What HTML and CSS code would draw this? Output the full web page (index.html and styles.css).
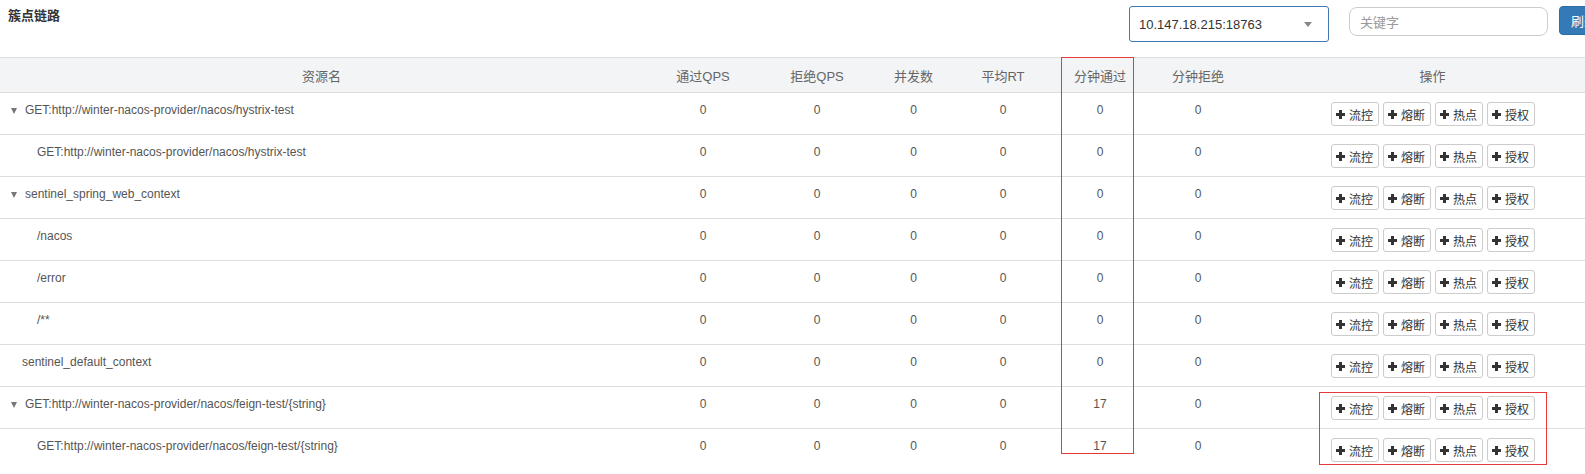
FILE: index.html
```html
<!DOCTYPE html>
<html lang="zh-CN">
<head>
<meta charset="utf-8">
<title>簇点链路</title>
<link rel="stylesheet" href="styles.css">
</head>
<body>
<div class="page">
  <div class="topbar">
    <div class="title">簇点链路</div>
    <div class="controls">
      <div class="select"><span>10.147.18.215:18763</span><i class="caret"></i></div>
      <div class="search"><span class="placeholder">关键字</span></div>
      <div class="refresh">刷新</div>
    </div>
  </div>

  <div class="table">
    <div class="row head">
      <div class="c">资源名</div>
      <div class="c">通过QPS</div>
      <div class="c">拒绝QPS</div>
      <div class="c">并发数</div>
      <div class="c">平均RT</div>
      <div class="c">分钟通过</div>
      <div class="c">分钟拒绝</div>
      <div class="c">操作</div>
    </div>

    <div class="row">
      <div class="name"><i class="toggle"></i>GET:http://winter-nacos-provider/nacos/hystrix-test</div>
      <div class="num">0</div><div class="num">0</div><div class="num">0</div><div class="num">0</div><div class="num">0</div><div class="num">0</div>
      <div class="ops"><span class="btn"><svg class="plus" viewBox="0 0 9 9"><rect x="3" y="0" width="3" height="9"/><rect x="0" y="3" width="9" height="3"/></svg>流控</span><span class="btn"><svg class="plus" viewBox="0 0 9 9"><rect x="3" y="0" width="3" height="9"/><rect x="0" y="3" width="9" height="3"/></svg>熔断</span><span class="btn"><svg class="plus" viewBox="0 0 9 9"><rect x="3" y="0" width="3" height="9"/><rect x="0" y="3" width="9" height="3"/></svg>热点</span><span class="btn"><svg class="plus" viewBox="0 0 9 9"><rect x="3" y="0" width="3" height="9"/><rect x="0" y="3" width="9" height="3"/></svg>授权</span></div>
    </div>

    <div class="row">
      <div class="name child">GET:http://winter-nacos-provider/nacos/hystrix-test</div>
      <div class="num">0</div><div class="num">0</div><div class="num">0</div><div class="num">0</div><div class="num">0</div><div class="num">0</div>
      <div class="ops"><span class="btn"><svg class="plus" viewBox="0 0 9 9"><rect x="3" y="0" width="3" height="9"/><rect x="0" y="3" width="9" height="3"/></svg>流控</span><span class="btn"><svg class="plus" viewBox="0 0 9 9"><rect x="3" y="0" width="3" height="9"/><rect x="0" y="3" width="9" height="3"/></svg>熔断</span><span class="btn"><svg class="plus" viewBox="0 0 9 9"><rect x="3" y="0" width="3" height="9"/><rect x="0" y="3" width="9" height="3"/></svg>热点</span><span class="btn"><svg class="plus" viewBox="0 0 9 9"><rect x="3" y="0" width="3" height="9"/><rect x="0" y="3" width="9" height="3"/></svg>授权</span></div>
    </div>

    <div class="row">
      <div class="name"><i class="toggle"></i>sentinel_spring_web_context</div>
      <div class="num">0</div><div class="num">0</div><div class="num">0</div><div class="num">0</div><div class="num">0</div><div class="num">0</div>
      <div class="ops"><span class="btn"><svg class="plus" viewBox="0 0 9 9"><rect x="3" y="0" width="3" height="9"/><rect x="0" y="3" width="9" height="3"/></svg>流控</span><span class="btn"><svg class="plus" viewBox="0 0 9 9"><rect x="3" y="0" width="3" height="9"/><rect x="0" y="3" width="9" height="3"/></svg>熔断</span><span class="btn"><svg class="plus" viewBox="0 0 9 9"><rect x="3" y="0" width="3" height="9"/><rect x="0" y="3" width="9" height="3"/></svg>热点</span><span class="btn"><svg class="plus" viewBox="0 0 9 9"><rect x="3" y="0" width="3" height="9"/><rect x="0" y="3" width="9" height="3"/></svg>授权</span></div>
    </div>

    <div class="row">
      <div class="name child">/nacos</div>
      <div class="num">0</div><div class="num">0</div><div class="num">0</div><div class="num">0</div><div class="num">0</div><div class="num">0</div>
      <div class="ops"><span class="btn"><svg class="plus" viewBox="0 0 9 9"><rect x="3" y="0" width="3" height="9"/><rect x="0" y="3" width="9" height="3"/></svg>流控</span><span class="btn"><svg class="plus" viewBox="0 0 9 9"><rect x="3" y="0" width="3" height="9"/><rect x="0" y="3" width="9" height="3"/></svg>熔断</span><span class="btn"><svg class="plus" viewBox="0 0 9 9"><rect x="3" y="0" width="3" height="9"/><rect x="0" y="3" width="9" height="3"/></svg>热点</span><span class="btn"><svg class="plus" viewBox="0 0 9 9"><rect x="3" y="0" width="3" height="9"/><rect x="0" y="3" width="9" height="3"/></svg>授权</span></div>
    </div>

    <div class="row">
      <div class="name child">/error</div>
      <div class="num">0</div><div class="num">0</div><div class="num">0</div><div class="num">0</div><div class="num">0</div><div class="num">0</div>
      <div class="ops"><span class="btn"><svg class="plus" viewBox="0 0 9 9"><rect x="3" y="0" width="3" height="9"/><rect x="0" y="3" width="9" height="3"/></svg>流控</span><span class="btn"><svg class="plus" viewBox="0 0 9 9"><rect x="3" y="0" width="3" height="9"/><rect x="0" y="3" width="9" height="3"/></svg>熔断</span><span class="btn"><svg class="plus" viewBox="0 0 9 9"><rect x="3" y="0" width="3" height="9"/><rect x="0" y="3" width="9" height="3"/></svg>热点</span><span class="btn"><svg class="plus" viewBox="0 0 9 9"><rect x="3" y="0" width="3" height="9"/><rect x="0" y="3" width="9" height="3"/></svg>授权</span></div>
    </div>

    <div class="row">
      <div class="name child">/**</div>
      <div class="num">0</div><div class="num">0</div><div class="num">0</div><div class="num">0</div><div class="num">0</div><div class="num">0</div>
      <div class="ops"><span class="btn"><svg class="plus" viewBox="0 0 9 9"><rect x="3" y="0" width="3" height="9"/><rect x="0" y="3" width="9" height="3"/></svg>流控</span><span class="btn"><svg class="plus" viewBox="0 0 9 9"><rect x="3" y="0" width="3" height="9"/><rect x="0" y="3" width="9" height="3"/></svg>熔断</span><span class="btn"><svg class="plus" viewBox="0 0 9 9"><rect x="3" y="0" width="3" height="9"/><rect x="0" y="3" width="9" height="3"/></svg>热点</span><span class="btn"><svg class="plus" viewBox="0 0 9 9"><rect x="3" y="0" width="3" height="9"/><rect x="0" y="3" width="9" height="3"/></svg>授权</span></div>
    </div>

    <div class="row">
      <div class="name leaf">sentinel_default_context</div>
      <div class="num">0</div><div class="num">0</div><div class="num">0</div><div class="num">0</div><div class="num">0</div><div class="num">0</div>
      <div class="ops"><span class="btn"><svg class="plus" viewBox="0 0 9 9"><rect x="3" y="0" width="3" height="9"/><rect x="0" y="3" width="9" height="3"/></svg>流控</span><span class="btn"><svg class="plus" viewBox="0 0 9 9"><rect x="3" y="0" width="3" height="9"/><rect x="0" y="3" width="9" height="3"/></svg>熔断</span><span class="btn"><svg class="plus" viewBox="0 0 9 9"><rect x="3" y="0" width="3" height="9"/><rect x="0" y="3" width="9" height="3"/></svg>热点</span><span class="btn"><svg class="plus" viewBox="0 0 9 9"><rect x="3" y="0" width="3" height="9"/><rect x="0" y="3" width="9" height="3"/></svg>授权</span></div>
    </div>

    <div class="row">
      <div class="name"><i class="toggle"></i>GET:http://winter-nacos-provider/nacos/feign-test/{string}</div>
      <div class="num">0</div><div class="num">0</div><div class="num">0</div><div class="num">0</div><div class="num">17</div><div class="num">0</div>
      <div class="ops"><span class="btn"><svg class="plus" viewBox="0 0 9 9"><rect x="3" y="0" width="3" height="9"/><rect x="0" y="3" width="9" height="3"/></svg>流控</span><span class="btn"><svg class="plus" viewBox="0 0 9 9"><rect x="3" y="0" width="3" height="9"/><rect x="0" y="3" width="9" height="3"/></svg>熔断</span><span class="btn"><svg class="plus" viewBox="0 0 9 9"><rect x="3" y="0" width="3" height="9"/><rect x="0" y="3" width="9" height="3"/></svg>热点</span><span class="btn"><svg class="plus" viewBox="0 0 9 9"><rect x="3" y="0" width="3" height="9"/><rect x="0" y="3" width="9" height="3"/></svg>授权</span></div>
    </div>

    <div class="row">
      <div class="name child">GET:http://winter-nacos-provider/nacos/feign-test/{string}</div>
      <div class="num">0</div><div class="num">0</div><div class="num">0</div><div class="num">0</div><div class="num">17</div><div class="num">0</div>
      <div class="ops"><span class="btn"><svg class="plus" viewBox="0 0 9 9"><rect x="3" y="0" width="3" height="9"/><rect x="0" y="3" width="9" height="3"/></svg>流控</span><span class="btn"><svg class="plus" viewBox="0 0 9 9"><rect x="3" y="0" width="3" height="9"/><rect x="0" y="3" width="9" height="3"/></svg>熔断</span><span class="btn"><svg class="plus" viewBox="0 0 9 9"><rect x="3" y="0" width="3" height="9"/><rect x="0" y="3" width="9" height="3"/></svg>热点</span><span class="btn"><svg class="plus" viewBox="0 0 9 9"><rect x="3" y="0" width="3" height="9"/><rect x="0" y="3" width="9" height="3"/></svg>授权</span></div>
    </div>
  </div>

  <div class="mark mark-col"></div>
  <div class="mark mark-ops"></div>
</div>
</body>
</html>
```

FILE: styles.css
```css
html, body {
  margin: 0;
  padding: 0;
  overflow: hidden;
  background: #fff;
}

body {
  font-family: "Liberation Sans", Arial, "Noto Sans CJK SC", sans-serif;
  font-size: 12px;
  color: #555;
}

.page {
  position: relative;
  width: 1619px;
}

/* top bar */
.topbar {
  height: 57px;
  display: flex;
  justify-content: space-between;
  align-items: flex-start;
  box-sizing: border-box;
  padding: 0 10px 0 8px;
}

.title {
  font-size: 13px;
  font-weight: bold;
  color: #333;
  line-height: 18px;
  margin-top: 7px;
}

.controls {
  display: flex;
  align-items: flex-start;
}

.select {
  width: 200px;
  height: 36px;
  margin-top: 6px;
  box-sizing: border-box;
  border: 1px solid #4279b4;
  border-radius: 3px;
  display: flex;
  align-items: center;
  justify-content: space-between;
  padding: 0 16px 0 9px;
  font-size: 13px;
  color: #333;
}

.caret {
  width: 0;
  height: 0;
  border-left: 4.5px solid transparent;
  border-right: 4.5px solid transparent;
  border-top: 5px solid #888;
  margin-top: 1px;
}

.search {
  width: 199px;
  height: 29px;
  margin-top: 7px;
  margin-left: 20px;
  box-sizing: border-box;
  border: 1px solid #ccc;
  border-radius: 8px;
  display: flex;
  align-items: center;
  padding-left: 10px;
  font-size: 13px;
}

.placeholder {
  color: #999;
}

.refresh {
  width: 50px;
  height: 29px;
  margin-top: 6px;
  margin-left: 11px;
  box-sizing: border-box;
  background: #337ab7;
  border: 1px solid #2e6da4;
  border-radius: 4px;
  color: #fff;
  font-size: 13px;
  display: flex;
  align-items: center;
  justify-content: center;
}

/* table */
.row {
  display: grid;
  grid-template-columns: 643px 120px 108px 85px 94px 100px 96px 373px;
  height: 42px;
  box-sizing: border-box;
  border-bottom: 1px solid #ddd;
}

.row:last-child {
  border-bottom-color: transparent;
}

.row.head {
  height: 36px;
  border-top: 1px solid #ddd;
  border-bottom: 1px solid #ddd;
  background: #f3f4f6;
  color: #666;
  font-size: 13px;
}

.head .c {
  display: flex;
  align-items: center;
  justify-content: center;
}

.name {
  display: flex;
  align-items: flex-start;
  line-height: 20px;
  padding: 7px 0 0 11px;
  white-space: nowrap;
}

.name.child {
  padding-left: 37px;
}

.name.leaf {
  padding-left: 22px;
}

.toggle {
  width: 0;
  height: 0;
  border-left: 3.5px solid transparent;
  border-right: 3.5px solid transparent;
  border-top: 6px solid #777;
  margin: 8px 8px 0 0;
}

.num {
  text-align: center;
  line-height: 20px;
  padding-top: 7px;
}

.ops {
  display: flex;
  align-items: center;
  justify-content: center;
  gap: 4px;
}

.btn {
  width: 48px;
  height: 24px;
  box-sizing: border-box;
  border: 1px solid #ccc;
  border-radius: 3px;
  background: #fff;
  color: #333;
  font-size: 12px;
  display: flex;
  align-items: center;
  justify-content: center;
  gap: 4px;
  margin-top: 1px;
}

.plus {
  width: 9px;
  height: 9px;
  fill: #333;
}

/* annotation marks */
.mark {
  position: absolute;
  border: 1px solid #e63a3a;
  box-sizing: border-box;
}

.mark-col {
  left: 1061px;
  top: 57px;
  width: 73px;
  height: 397px;
}

.mark-ops {
  left: 1319px;
  top: 392px;
  width: 228px;
  height: 73px;
}
```
